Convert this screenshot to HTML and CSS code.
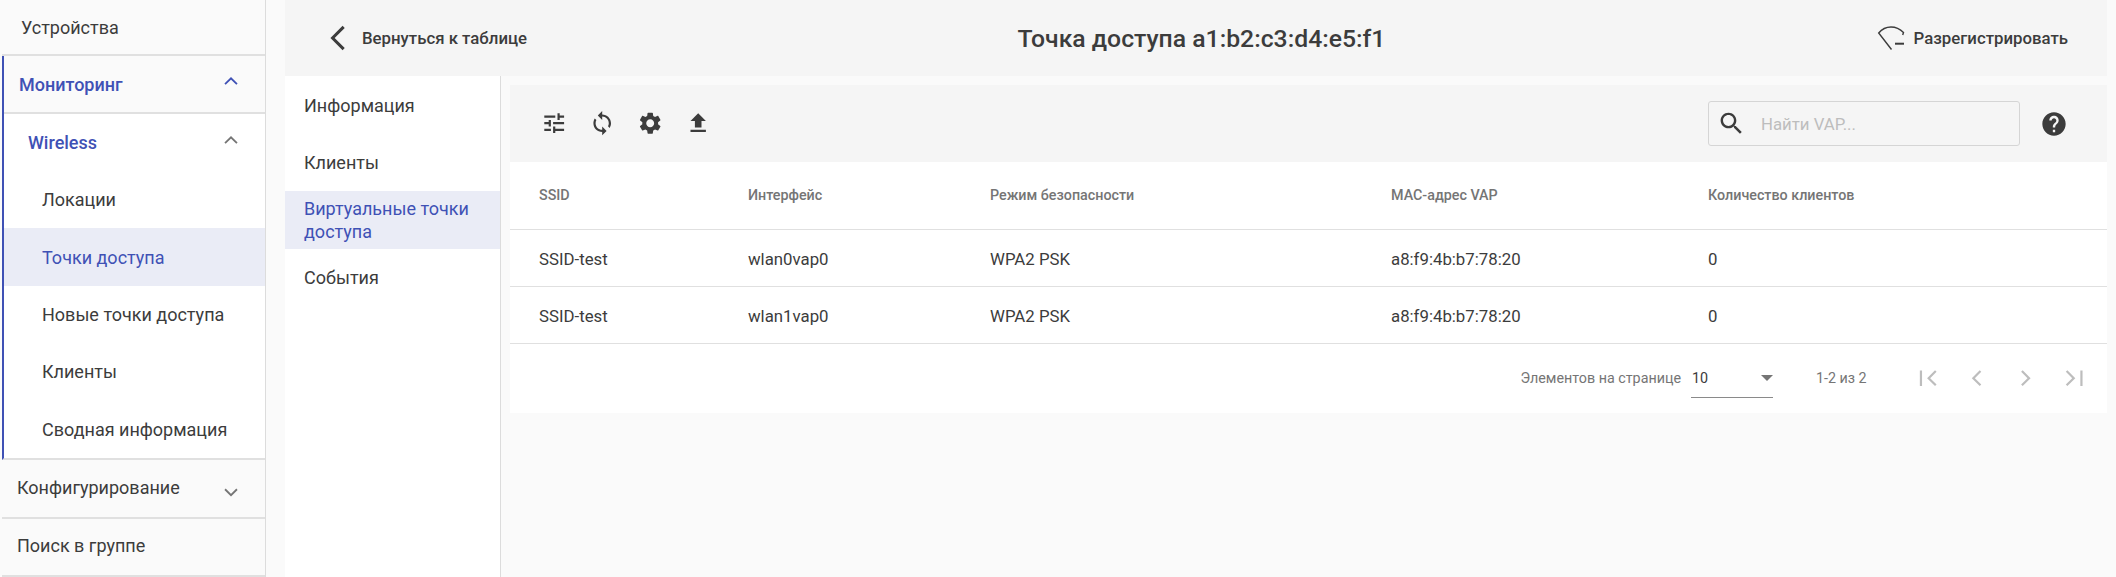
FILE: index.html
```html
<!DOCTYPE html>
<html lang="ru">
<head>
    <meta charset="UTF-8">
    <meta name="viewport" content="width=device-width, initial-scale=1.0">
    <title>Точка доступа a1:b2:c3:d4:e5:f1</title>

    <link rel="stylesheet" href="styles.css">
</head>
<body>

    <!-- Left menu -->
    <nav class="sidebar">
        <div class="menu-top first">Устройства</div>

        <div class="menu-group">
            <div class="menu-top open">
                <span>Мониторинг</span>
                <svg class="chevron blue" viewBox="0 0 24 24"><path d="M5.500 15.500 12 9l6.500 6.500"/></svg>
            </div>
            <div class="menu-sub">
                <span>Wireless</span>
                <svg class="chevron" viewBox="0 0 24 24"><path d="M5.500 15.500 12 9l6.500 6.500"/></svg>
            </div>
            <div class="menu-item">Локации</div>
            <div class="menu-item active">Точки доступа</div>
            <div class="menu-item">Новые точки доступа</div>
            <div class="menu-item">Клиенты</div>
            <div class="menu-item">Сводная информация</div>
        </div>

        <div class="menu-top closed">
            <span>Конфигурирование</span>
            <svg class="chevron down" viewBox="0 0 24 24"><path d="M5.500 9 12 15.500 18.500 9"/></svg>
        </div>
        <div class="menu-top closed">Поиск в группе</div>
    </nav>

    <div class="content">
        <header class="page-head">
            <a class="back">
                <svg class="back-icon" viewBox="0 0 24 24"><path d="M16 2.500 6.500 12l9.500 9.500"/></svg>
                Вернуться к таблице
            </a>
            <h1>Точка доступа a1:b2:c3:d4:e5:f1</h1>
            <a class="unregister">
                <svg class="wifi-off" viewBox="0 0 28 24"><path d="M14.500 23.500 1.700 7C5 3 9 1 14 1s9 2 12.500 5.500L25.700 9"/><path class="dash" d="M18 17.700h9"/></svg>
                Разрегистрировать
            </a>
        </header>

        <div class="page-body">
            <ul class="tabs">
                <li>Информация</li>
                <li>Клиенты</li>
                <li class="active">Виртуальные точки доступа</li>
                <li>События</li>
            </ul>

            <section class="main">
                <div class="toolbar">
                    <svg class="tool" viewBox="0 0 24 24"><path d="M3 17v2h6v-2H3zM3 5v2h10V5H3zm10 16v-2h8v-2h-8v-2h-2v6h2zM7 9v2H3v2h4v2h2V9H7zm14 4v-2H11v2h10zm-6-4h2V7h4V5h-4V3h-2v6z"/></svg>
                    <svg class="tool" viewBox="0 0 24 24"><path d="M12 4V1L8 5l4 4V6c3.310 0 6 2.690 6 6 0 1.010-.25 1.970-.7 2.800l1.460 1.460C19.540 15.030 20 13.570 20 12c0-4.420-3.580-8-8-8zm0 14c-3.310 0-6-2.690-6-6 0-1.010.25-1.970.7-2.800L5.240 7.740C4.460 8.970 4 10.430 4 12c0 4.420 3.580 8 8 8v3l4-4-4-4v3z"/></svg>
                    <svg class="tool" viewBox="0 0 24 24"><path d="M19.140 12.940c.04-.3.06-.61.06-.94 0-.32-.02-.64-.07-.94l2.030-1.580c.18-.14.23-.41.12-.61l-1.920-3.320c-.12-.22-.37-.29-.59-.22l-2.390.96c-.5-.38-1.030-.7-1.620-.94l-.36-2.540c-.04-.24-.24-.41-.48-.41h-3.840c-.24 0-.43.17-.47.41l-.36 2.540c-.59.24-1.130.57-1.620.94l-2.390-.96c-.22-.08-.47 0-.59.22L2.740 8.870c-.12.21-.08.47.12.61l2.030 1.580c-.05.3-.09.63-.09.94s.02.64.07.94l-2.030 1.580c-.18.14-.23.41-.12.61l1.920 3.320c.12.22.37.29.59.22l2.390-.96c.5.38 1.030.7 1.620.94l.36 2.540c.05.24.24.41.48.41h3.840c.24 0 .44-.17.47-.41l.36-2.540c.59-.24 1.130-.56 1.620-.94l2.390.96c.22.08.47 0 .59-.22l1.920-3.320c.12-.22.07-.47-.12-.61l-2.010-1.580zM12 15.600c-1.980 0-3.600-1.620-3.600-3.600s1.620-3.600 3.600-3.600 3.600 1.620 3.600 3.600-1.620 3.600-3.600 3.600z"/></svg>
                    <svg class="tool" viewBox="0 0 24 24"><path d="M9 16h6v-6h4l-7-7-7 7h4v6zm-4 2h14v2H5v-2z"/></svg>

                    <label class="search">
                        <svg class="search-icon" viewBox="0 0 24 24"><path d="M15.500 14h-.79l-.28-.27C15.410 12.590 16 11.110 16 9.500 16 5.910 13.090 3 9.500 3S3 5.910 3 9.500 5.910 16 9.500 16c1.610 0 3.090-.59 4.230-1.570l.27.28v.79l5 4.990L20.490 19l-4.990-5zm-6 0C7.010 14 5 11.990 5 9.500S7.010 5 9.500 5 14 7.010 14 9.500 11.990 14 9.500 14z"/></svg>
                        <span class="placeholder">Найти VAP...</span>
                    </label>
                    <svg class="help" viewBox="0 0 24 24"><path d="M12 2C6.480 2 2 6.480 2 12s4.480 10 10 10 10-4.480 10-10S17.520 2 12 2zm1 17h-2v-2h2v2zm2.070-7.750-.9.920C13.450 12.900 13 13.500 13 15h-2v-.5c0-1.100.45-2.100 1.170-2.830l1.240-1.260c.37-.36.590-.86.590-1.410 0-1.100-.9-2-2-2s-2 .9-2 2H8c0-2.210 1.790-4 4-4s4 1.790 4 4c0 .88-.36 1.680-.93 2.250z"/></svg>
                </div>

                <table class="vap-table">
                    <thead>
                        <tr>
                            <th class="col-ssid">SSID</th>
                            <th class="col-iface">Интерфейс</th>
                            <th class="col-mode">Режим безопасности</th>
                            <th class="col-mac">MAC-адрес VAP</th>
                            <th>Количество клиентов</th>
                        </tr>
                    </thead>
                    <tbody>
                        <tr>
                            <td>SSID-test</td>
                            <td>wlan0vap0</td>
                            <td>WPA2 PSK</td>
                            <td>a8:f9:4b:b7:78:20</td>
                            <td>0</td>
                        </tr>
                        <tr>
                            <td>SSID-test</td>
                            <td>wlan1vap0</td>
                            <td>WPA2 PSK</td>
                            <td>a8:f9:4b:b7:78:20</td>
                            <td>0</td>
                        </tr>
                    </tbody>
                </table>

                <div class="pager">
                    <span class="pager-label">Элементов на странице</span>
                    <div class="pager-select">
                        <span>10</span>
                        <i class="caret"></i>
                    </div>
                    <span class="pager-range">1-2 из 2</span>
                    <svg class="pager-btn" viewBox="0 0 24 24"><path d="M4.500 5v14M18 5.500 11.500 12l6.500 6.500"/></svg>
                    <svg class="pager-btn" viewBox="0 0 24 24"><path d="M15 5.500 8.500 12l6.500 6.500"/></svg>
                    <svg class="pager-btn" viewBox="0 0 24 24"><path d="M9 5.500l6.500 6.500L9 18.500"/></svg>
                    <svg class="pager-btn" viewBox="0 0 24 24"><path d="M6 5.500l6.500 6.500L6 18.500M19.500 5v14"/></svg>
                </div>
            </section>
        </div>
    </div>

</body>
</html>
```

FILE: styles.css
```css
* {
    box-sizing: border-box;
}

html, body {
    height: 100%;
}

body {
    margin: 0;
    display: flex;
    height: 577px;
    overflow: hidden;
    background: #fafafa;
    color: #3c3c3c;
    font-family: Roboto, "Noto Sans", sans-serif;
    font-size: 18px;
}

/* left menu */
.sidebar {
    width: 264px;
    margin-left: 2px;
    flex-shrink: 0;
    background: #fafafa;
    border-right: 1px solid #dcdcdc;
}

.menu-top {
    height: 58px;
    display: flex;
    align-items: center;
    justify-content: space-between;
    padding: 0 23px 0 15px;
    background: #fafafa;
    border-bottom: 2px solid #e0e0e0;
}

.menu-top.first {
    height: 56px;
    padding-left: 19px;
}

.menu-top.open {
    color: #3f51b5;
    font-weight: 500;
}

.menu-top.closed {
    padding-bottom: 2px;
}

.menu-group {
    margin-bottom: 1px;
    background: #fff;
    border-left: 2px solid #3f51b5;
    border-bottom: 2px solid #e0e0e0;
}

.menu-sub {
    height: 57px;
    display: flex;
    align-items: center;
    justify-content: space-between;
    padding: 0 23px 0 24px;
    color: #3f51b5;
    font-weight: 500;
}

.menu-item {
    height: 57.400px;
    display: flex;
    align-items: center;
    padding-left: 38px;
}

.menu-item.active {
    background: #eaecf6;
    color: #3f51b5;
}

.chevron {
    width: 22px;
    height: 22px;
    margin-bottom: 6px;
    fill: none;
    stroke: #757575;
    stroke-width: 2;
}

.chevron.blue {
    stroke: #3f51b5;
}

.chevron.down {
    margin: 8px 0 0;
}

/* right part */
.content {
    margin-left: 19px;
    margin-right: 9px;
    flex: 1;
    min-width: 0;
    display: flex;
    flex-direction: column;
}

.page-head {
    height: 76px;
    flex-shrink: 0;
    display: grid;
    grid-template-columns: 1fr auto 1fr;
    align-items: center;
    padding: 0 39px 0 40px;
    background: #f5f5f5;
}

.page-head h1 {
    margin: 0;
    padding-left: 10px;
    font-size: 24.750px;
    font-weight: 500;
}

.back, .unregister {
    display: flex;
    align-items: center;
    font-size: 16.800px;
    font-weight: 500;
}

.unregister {
    justify-self: end;
}

.back-icon {
    width: 28px;
    height: 28px;
    margin-right: 9px;
    fill: none;
    stroke: #3c3c3c;
    stroke-width: 2.600;
}

.wifi-off {
    width: 28px;
    height: 24px;
    margin-right: 9px;
    fill: none;
    stroke: #3c3c3c;
    stroke-width: 1.400;
}

.wifi-off .dash {
    stroke-width: 2;
}

.page-body {
    flex: 1;
    display: flex;
    min-height: 0;
}

.tabs {
    width: 216px;
    flex-shrink: 0;
    margin: 0;
    padding: 0;
    list-style: none;
    background: #fff;
    border-right: 1px solid #dcdcdc;
}

.tabs li {
    height: 57.500px;
    display: flex;
    align-items: center;
    padding: 1px 19px 0;
    line-height: 23px;
}

.tabs li.active {
    background: #eaecf6;
    color: #3f51b5;
}

.main {
    flex: 1;
    min-width: 0;
    margin: 9px 0 0 9px;
}

.toolbar {
    height: 77px;
    display: flex;
    align-items: center;
    padding: 0 39px 0 31px;
    background: #f5f5f5;
}

.tool {
    width: 26.400px;
    height: 26.400px;
    margin-right: 21.600px;
    fill: #3c3c3c;
}

.search {
    width: 312px;
    height: 45px;
    margin-left: auto;
    margin-right: 20px;
    display: flex;
    align-items: center;
    padding-left: 8px;
    border: 1px solid #d5d5d5;
    border-radius: 3px;
}

.search-icon {
    width: 29px;
    height: 29px;
    fill: #3c3c3c;
}

.placeholder {
    margin-left: 15px;
    font-size: 16.800px;
    color: #bdbdbd;
}

.help {
    width: 28px;
    height: 28px;
    fill: #3c3c3c;
}

.vap-table {
    width: 100%;
    border-collapse: collapse;
    table-layout: fixed;
    background: #fff;
    font-size: 16.800px;
}

.vap-table th {
    height: 67px;
    padding: 0 0 0 29px;
    text-align: left;
    font-weight: 500;
    font-size: 14.300px;
    color: #757575;
    border-bottom: 1px solid #e0e0e0;
}

.vap-table td {
    height: 57px;
    padding: 2px 0 0 29px;
    border-bottom: 1px solid #e0e0e0;
}

.col-ssid { width: 209px; }
.col-iface { width: 242px; }
.col-mode { width: 401px; }
.col-mac { width: 317px; }

.pager {
    height: 69px;
    display: flex;
    align-items: center;
    justify-content: flex-end;
    padding-right: 21px;
    background: #fff;
    font-size: 14.300px;
    color: #757575;
}

.pager-select {
    width: 82px;
    height: 39px;
    margin: 0 43px 0 10px;
    display: flex;
    align-items: center;
    justify-content: space-between;
    padding-left: 1px;
    border-bottom: 1px solid #8a8a8a;
    color: #3c3c3c;
}

.caret {
    border-left: 6px solid transparent;
    border-right: 6px solid transparent;
    border-top: 6px solid #757575;
}

.pager-range {
    margin-right: 49px;
}

.pager-btn {
    width: 26.400px;
    height: 26.400px;
    margin-right: 21.600px;
    fill: none;
    stroke: #bdbdbd;
    stroke-width: 2;
}

.pager-btn:last-child {
    margin-right: 0;
}
```
